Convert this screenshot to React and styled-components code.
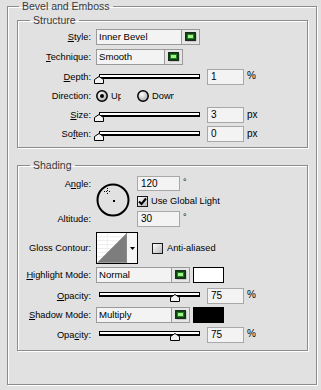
import styled, { createGlobalStyle } from "styled-components";

const GlobalStyle = createGlobalStyle`
  html, body { margin: 0; padding: 0; background: #e1e1e1; }
  body {
    width: 321px;
    height: 390px;
    overflow: hidden;
    font-family: "Liberation Sans", Arial, sans-serif;
    font-size: 9.3px;
    color: #000;
  }
  * { box-sizing: border-box; }
`;

const fieldFont = `"Liberation Sans", Arial, sans-serif`;

const Panel = styled.div`
  padding: 0 4px 0 7px;
`;

const Group = styled.fieldset`
  margin: ${(p) => p.$mt || 0}px 0 0 0;
  padding: ${(p) => p.$pad};
  border: 1px solid #8c8c8c;
  box-shadow: 1px 1px 0 #fff, inset 1px 1px 0 #fff;
  min-width: 0;
`;

const Legend = styled.legend`
  margin-left: ${(p) => p.$ml}px;
  padding: 0 3px;
  font-family: ${fieldFont};
  font-size: 10.5px;
  line-height: 13px;
  color: #3a3a3a;
`;

const Row = styled.div`
  display: flex;
  align-items: center;
  height: ${(p) => p.$h || 16}px;
  margin-top: ${(p) => p.$mt || 0}px;
`;

const Label = styled.div`
  width: 78px;
  flex: none;
  padding-right: 5px;
  text-align: right;
  white-space: nowrap;
  line-height: 12px;
`;

const Select = styled.div`
  display: flex;
  width: ${(p) => p.$w}px;
  height: 16px;
  flex: none;
`;

const SelectField = styled.div`
  flex: 1;
  border: 1px solid #9a9a9a;
  background: #f3f3f3;
  padding-left: 2px;
  font-family: ${fieldFont};
  font-size: 9.6px;
  line-height: 14px;
  white-space: nowrap;
  overflow: hidden;
`;

const SelectButton = styled.div`
  width: 18px;
  flex: none;
  border: 1px solid #9a9a9a;
  border-left: none;
  background: #e6e6e6;
  display: flex;
  align-items: center;
  justify-content: center;
`;

const Swatch = styled.div`
  width: 31px;
  height: 16px;
  margin-left: 3px;
  border: 1px solid #000;
  background: ${(p) => p.$color};
`;

const SliderWrap = styled.div`
  position: relative;
  width: 101px;
  height: 16px;
  margin-left: 3px;
  margin-right: 7px;
  padding-top: ${(p) => p.$top || 5}px;
  flex: none;
`;

const Track = styled.div`
  height: 5px;
  border: 1px solid #000;
  border-bottom-width: 2px;
  background: #fff;
`;

const Thumb = styled.svg`
  position: absolute;
  top: ${(p) => (p.$top || 5) + 2}px;
  margin-left: -5px;
`;

const NumInput = styled.div`
  width: ${(p) => p.$w || 37}px;
  height: ${(p) => p.$h || 16}px;
  flex: none;
  border: 1px solid #a8a8a8;
  background: #f3f3f3;
  padding-left: 3px;
  font-family: ${fieldFont};
  font-size: 10px;
  line-height: ${(p) => (p.$h || 16) - 2}px;
`;

const Unit = styled.span`
  align-self: flex-start;
  margin-left: 3px;
  margin-top: ${(p) => p.$mt || 2}px;
  font-family: ${fieldFont};
  font-size: ${(p) => p.$size || 10}px;
  line-height: 10px;
`;

const Clip = styled.span`
  display: inline-block;
  width: ${(p) => p.$w}px;
  overflow: hidden;
  white-space: nowrap;
  line-height: 12px;
  margin-left: ${(p) => p.$ml || 4}px;
`;

const Check = styled.span`
  display: inline-flex;
  align-items: center;
  justify-content: center;
  width: 11px;
  height: 11px;
  flex: none;
  margin-left: ${(p) => p.$ml || 0}px;
  border: 1px solid #1a1a1a;
  background: linear-gradient(135deg, #fdfdfd, #b9b9b9);
`;

const AngleGrid = styled.div`
  display: grid;
  grid-template-columns: 78px 41px auto;
  grid-template-rows: 15px 20px 16px;
  align-items: center;
`;

const Dial = styled.svg`
  grid-column: 2;
  grid-row: 1 / span 3;
  align-self: start;
  margin-top: 7px;
`;

const Cell = styled.div`
  grid-column: ${(p) => p.$col};
  grid-row: ${(p) => p.$row};
  display: flex;
  align-items: center;
  height: 100%;
`;

const ContourBox = styled.div`
  display: flex;
  width: 42px;
  height: 32px;
  flex: none;
  border: 1px solid #000;
  background: #fff;
`;

const ContourArrow = styled.div`
  width: 11px;
  border-left: 1px solid #8a8a8a;
  background: #f6f6f6;
  display: flex;
  align-items: center;
  justify-content: center;
`;

const Lamp = () => (
  <svg width="12" height="10" viewBox="0 0 12 10">
    <rect x="1.5" y="1.5" width="10" height="8" fill="#a9a9a9" />
    <rect x="0.5" y="0.5" width="10" height="8" fill="#0c440f" stroke="#1b2a1b" />
    <rect x="2" y="2" width="7" height="5" fill="#1f7d23" />
    <rect x="3" y="3" width="5" height="3" fill="#a3f48a" />
  </svg>
);

const Radio = ({ on }) => (
  <svg width="12" height="12" viewBox="0 0 12 12" style={{ flex: "none" }}>
    <defs>
      <radialGradient id="rg" cx="0.4" cy="0.35" r="0.7">
        <stop offset="0" stopColor="#ffffff" />
        <stop offset="1" stopColor="#a8a8a8" />
      </radialGradient>
    </defs>
    <circle cx="6" cy="6" r="5.2" fill="url(#rg)" stroke="#000" strokeWidth="1.5" />
    {on && <circle cx="6" cy="6" r="2" fill="#000" />}
  </svg>
);

const Slider = ({ pct, top }) => (
  <SliderWrap $top={top}>
    <Track />
    <Thumb $top={top} width="10" height="8" viewBox="0 0 10 8" style={{ left: `${pct}%` }}>
      <polygon points="0.5,7.5 0.5,3.5 5,0.5 9.5,3.5 9.5,7.5" fill="#f2f2f2" stroke="#000" />
    </Thumb>
  </SliderWrap>
);

const Dropdown = ({ w, children }) => (
  <Select $w={w}>
    <SelectField>{children}</SelectField>
    <SelectButton>
      <Lamp />
    </SelectButton>
  </Select>
);

const Tick = () => (
  <svg width="9" height="9" viewBox="0 0 9 9">
    <path d="M1 4.5 L3.5 7 L8 1.5" fill="none" stroke="#000" strokeWidth="2" />
  </svg>
);

export default function App() {
  return (
    <Panel>
      <GlobalStyle />
      <Group $pad="1px 8px 33px 9px">
        <Legend $ml={2}>Bevel and Emboss</Legend>

        <Group $pad="2px 0 5px 0">
          <Legend $ml={12}>Structure</Legend>
          <Row>
            <Label><u>S</u>tyle:</Label>
            <Dropdown w={104}>Inner Bevel</Dropdown>
          </Row>
          <Row $mt={4}>
            <Label><u>T</u>echnique:</Label>
            <Dropdown w={87}>Smooth</Dropdown>
          </Row>
          <Row $mt={4}>
            <Label><u>D</u>epth:</Label>
            <Slider pct={0} />
            <NumInput>1</NumInput>
            <Unit>%</Unit>
          </Row>
          <Row $mt={4} $h={14}>
            <Label>Direction:</Label>
            <Radio on />
            <Clip $w={10} $ml={3}>Up</Clip>
            <span style={{ width: 16 }} />
            <Radio />
            <Clip $w={22} $ml={3}>Down</Clip>
          </Row>
          <Row $mt={4}>
            <Label><u>S</u>ize:</Label>
            <Slider pct={0} />
            <NumInput>3</NumInput>
            <Unit $mt={3}>px</Unit>
          </Row>
          <Row $mt={3}>
            <Label>So<u>f</u>ten:</Label>
            <Slider pct={0} />
            <NumInput>0</NumInput>
            <Unit $mt={3}>px</Unit>
          </Row>
        </Group>

        <Group $mt={11} $pad="4px 0 7px 0">
          <Legend $ml={12}>Shading</Legend>
          <AngleGrid>
            <Cell $col={1} $row={1}><Label>A<u>n</u>gle:</Label></Cell>
            <Dial width="34" height="34" viewBox="0 0 34 34">
              <circle cx="17" cy="17" r="15.5" fill="none" stroke="#000" strokeWidth="2" />
              <rect x="17" y="17" width="2" height="2" fill="#000" />
              <rect x="11" y="5" width="1" height="1" fill="#000" />
              <rect x="11" y="7" width="1" height="1" fill="#000" />
              <rect x="11" y="10" width="1" height="1" fill="#000" />
              <rect x="8" y="8" width="1" height="1" fill="#000" />
              <rect x="10" y="8" width="1" height="1" fill="#000" />
              <rect x="13" y="8" width="1" height="1" fill="#000" />
            </Dial>
            <Cell $col={3} $row={1}>
              <NumInput $w={43} $h={15}>120</NumInput>
              <Unit $mt={1} $size={9}>°</Unit>
            </Cell>
            <Cell $col={3} $row={2}>
              <Check><Tick /></Check>
              <Clip $w={72} $ml={3}>Use Global Light</Clip>
            </Cell>
            <Cell $col={1} $row={3}><Label>Altitude:</Label></Cell>
            <Cell $col={3} $row={3}>
              <NumInput $w={43}>30</NumInput>
              <Unit $mt={1} $size={9}>°</Unit>
            </Cell>
          </AngleGrid>

          <Row $mt={5} $h={32}>
            <Label>Gloss Contour:</Label>
            <ContourBox>
              <svg width="30" height="30" viewBox="0 0 30 30">
                <rect width="30" height="30" fill="#fff" />
                {[3, 7, 11, 15, 19, 23].map((y) => (
                  <line key={y} x1="0" y1={y + 0.5} x2="30" y2={y + 0.5} stroke="#ececec" />
                ))}
                <line x1="10.5" y1="0" x2="10.5" y2="30" stroke="#efefef" />
                <polygon points="0,30 30,0 30,30" fill="#7d7d7d" />
              </svg>
              <ContourArrow>
                <svg width="5" height="3" viewBox="0 0 5 3">
                  <polygon points="0,0 5,0 2.5,3" fill="#000" />
                </svg>
              </ContourArrow>
            </ContourBox>
            <Check $ml={14} />
            <Clip $w={54} $ml={4}>Anti-aliased</Clip>
          </Row>

          <Row $mt={3}>
            <Label><u>H</u>ighlight Mode:</Label>
            <Dropdown w={94}>Normal</Dropdown>
            <Swatch $color="#fff" />
          </Row>
          <Row $mt={5}>
            <Label><u>O</u>pacity:</Label>
            <Slider pct={75} top={4} />
            <NumInput>75</NumInput>
            <Unit>%</Unit>
          </Row>
          <Row $mt={3}>
            <Label><u>S</u>hadow Mode:</Label>
            <Dropdown w={94}>Multiply</Dropdown>
            <Swatch $color="#000" />
          </Row>
          <Row $mt={4}>
            <Label>Opa<u>c</u>ity:</Label>
            <Slider pct={75} top={4} />
            <NumInput>75</NumInput>
            <Unit>%</Unit>
          </Row>
        </Group>
      </Group>
    </Panel>
  );
}
